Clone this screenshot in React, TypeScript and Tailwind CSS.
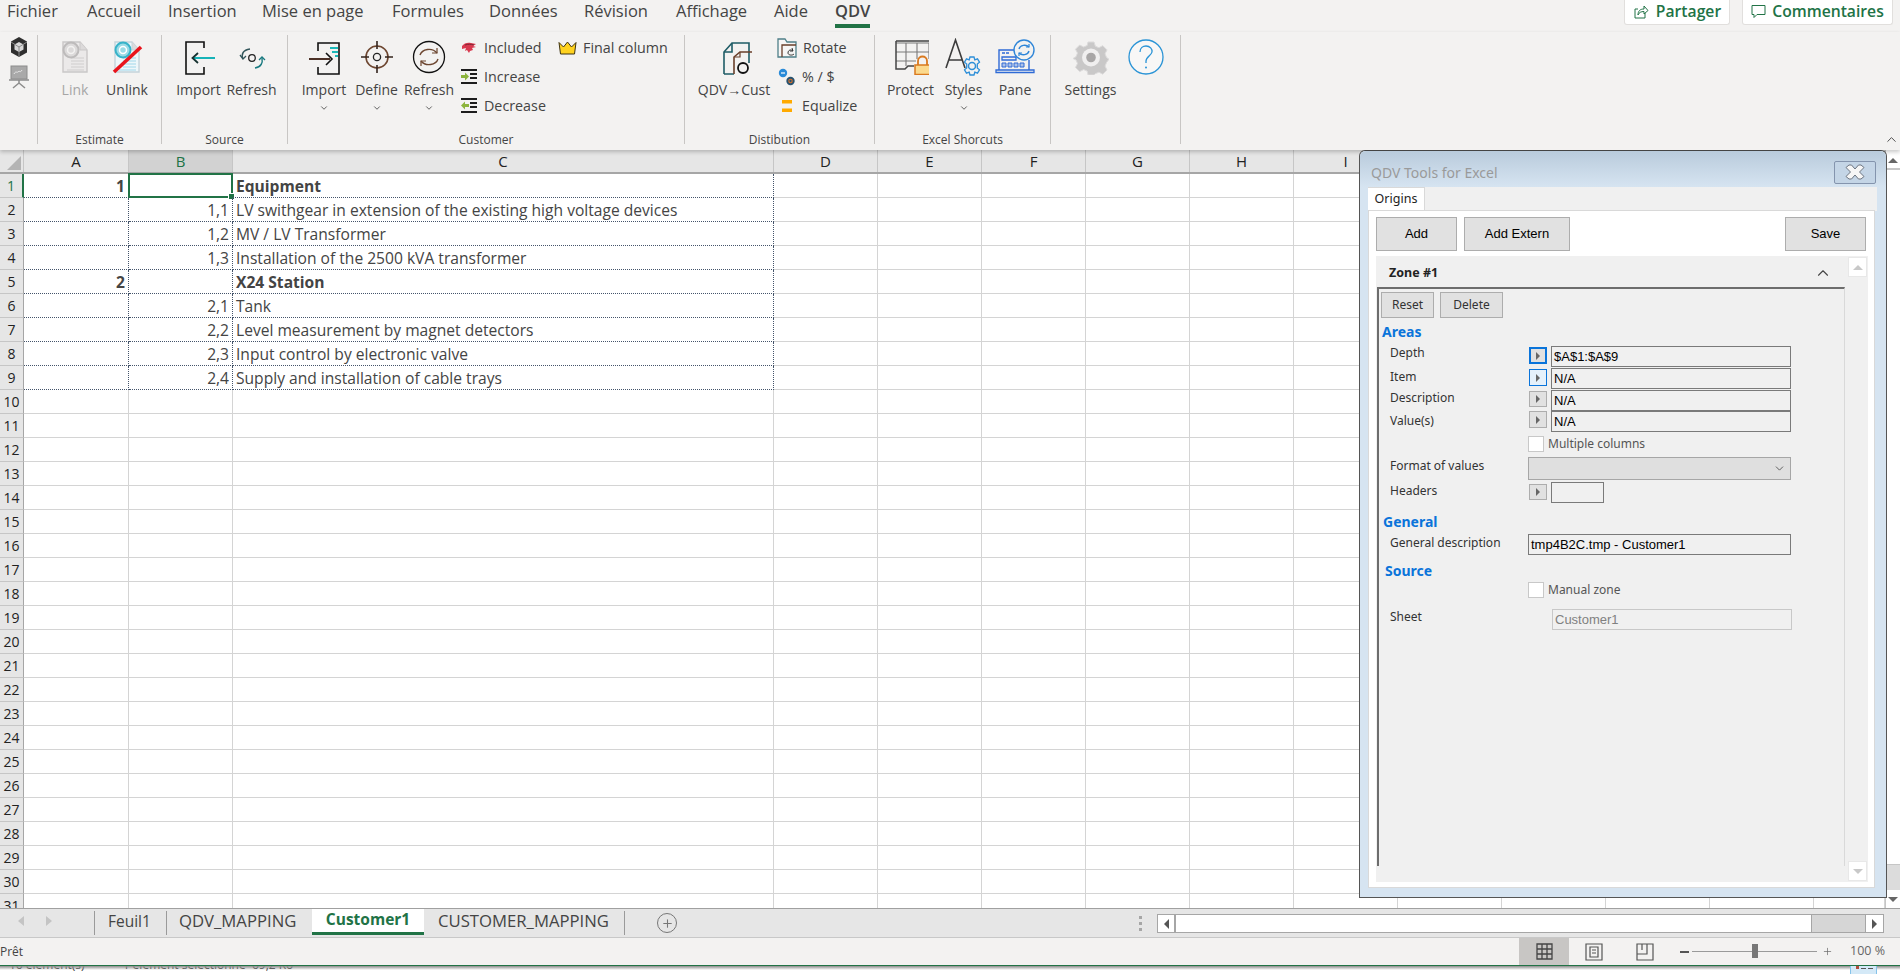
import React from 'react'
import { ChevronDown, ChevronUp, Plus } from 'lucide-react'

const columns = [
  { name: 'A', w: 'w-[105px]' },
  { name: 'B', w: 'w-[104px]' },
  { name: 'C', w: 'w-[541px]' },
  { name: 'D', w: 'w-[104px]' },
  { name: 'E', w: 'w-[104px]' },
  { name: 'F', w: 'w-[104px]' },
  { name: 'G', w: 'w-[104px]' },
  { name: 'H', w: 'w-[104px]' },
  { name: 'I', w: 'w-[104px]' },
  { name: 'J', w: 'w-[104px]' },
  { name: 'K', w: 'w-[104px]' },
  { name: 'L', w: 'w-[104px]' },
  { name: 'M', w: 'w-[104px]' },
  { name: 'N', w: 'w-[71px]' },
]

const data: [string, string, string, boolean][] = [
  ['1', '', 'Equipment', true],
  ['', '1,1', 'LV swithgear in extension of the existing high voltage devices', false],
  ['', '1,2', 'MV / LV Transformer', false],
  ['', '1,3', 'Installation of the 2500 kVA transformer', false],
  ['2', '', 'X24 Station', true],
  ['', '2,1', 'Tank', false],
  ['', '2,2', 'Level measurement by magnet detectors', false],
  ['', '2,3', 'Input control by electronic valve', false],
  ['', '2,4', 'Supply and installation of cable trays', false],
]

const rowNumbers = Array.from({ length: 31 }, (_, i) => i + 1)

const menuItems = [
  { label: 'Fichier', w: 'w-[80px]' },
  { label: 'Accueil', w: 'w-[81px]' },
  { label: 'Insertion', w: 'w-[94px]' },
  { label: 'Mise en page', w: 'w-[130px]' },
  { label: 'Formules', w: 'w-[97px]' },
  { label: 'Données', w: 'w-[95px]' },
  { label: 'Révision', w: 'w-[92px]' },
  { label: 'Affichage', w: 'w-[98px]' },
  { label: 'Aide', w: 'w-[61px]' },
]

function Icon({ children, size = 36 }: { children: React.ReactNode; size?: number }) {
  return (
    <svg width={size} height={size} viewBox={`0 0 ${size} ${size}`} fill="none" className="shrink-0">
      {children}
    </svg>
  )
}

function DocIcon({ off }: { off?: boolean }) {
  const edge = off ? '#c9c7c7' : '#c5d3da'
  const line = off ? '#cfcdcd' : '#9fd8ea'
  const globe = off ? '#bdbbbb' : '#37b3c9'
  return (
    <Icon>
      <path d="M6 3h17l7 8v22H6z" fill={off ? '#ebe9e9' : '#eef7fa'} stroke={edge} strokeWidth="1.400" />
      <path d="M23 3v8h7" fill="#dcdada" stroke={edge} />
      <path d="M14 19h13M14 22h13M14 25h13M14 28h13M10 31h17" stroke={line} strokeWidth="1.200" />
      <circle cx="14" cy="11" r="7.500" fill={off ? '#dcdada' : '#9adbe6'} stroke={globe} strokeWidth="2" />
      <circle cx="14" cy="11" r="3.500" fill="none" stroke={off ? '#f3f2f1' : '#ffffff'} strokeWidth="1.500" />
      {!off && <path d="M5 33 32 8" stroke="#e8141c" strokeWidth="3.600" />}
    </Icon>
  )
}

function ImportSourceIcon() {
  return (
    <Icon>
      <path d="M23 9V3H5v32h18v-7" stroke="#111" strokeWidth="1.600" />
      <path d="M12 19h22" stroke="#16b3b8" strokeWidth="2" />
      <path d="m17 14-5.500 5 5.500 5" stroke="#16312f" strokeWidth="1.800" />
    </Icon>
  )
}

function RefreshSourceIcon() {
  return (
    <Icon>
      <circle cx="18" cy="19" r="3.300" stroke="#222" strokeWidth="1.300" />
      <path d="M9 20c-2-5 0-9 7-10" stroke="#31555a" strokeWidth="1.400" />
      <path d="m6 16 3 4 3-3" stroke="#31555a" strokeWidth="1.300" />
      <path d="M28 19c1 5-1 9-7 10" stroke="#17797f" strokeWidth="1.400" />
      <path d="m25 21 3-3 3 3" stroke="#17797f" strokeWidth="1.300" />
    </Icon>
  )
}

function ImportCustomerIcon() {
  return (
    <Icon>
      <path d="M12 12V4h21v31H12v-7" stroke="#111" strokeWidth="1.600" />
      <path d="M24 9h8M26 13h6M29 17h3" stroke="#1bb8b8" strokeWidth="2" />
      <path d="M3 20h21" stroke="#4c3127" strokeWidth="2" />
      <path d="m20 14 6 6-6 6" stroke="#111" strokeWidth="1.600" />
    </Icon>
  )
}

function DefineIcon() {
  return (
    <Icon>
      <circle cx="18" cy="18" r="11" stroke="#6d4630" strokeWidth="1.600" />
      <circle cx="18" cy="18" r="3.600" stroke="#222" strokeWidth="1.300" />
      <path d="M18 2v8M18 26v8M2 18h8M26 18h8" stroke="#33241d" strokeWidth="1.600" />
    </Icon>
  )
}

function RefreshCustomerIcon() {
  return (
    <Icon>
      <circle cx="18" cy="18" r="15.500" stroke="#111" strokeWidth="1.300" />
      <path d="M9 16c2-6 12-8 17-2" stroke="#6d4630" strokeWidth="1.400" />
      <path d="M27 20c-2 6-12 8-17 2" stroke="#6d4630" strokeWidth="1.400" />
      <path d="M26 9v5h-5M10 27v-5h5" stroke="#6d4630" strokeWidth="1.200" />
    </Icon>
  )
}

function IncludedIcon() {
  return (
    <Icon size={18}>
      <path d="M2 7c2-3 6-4 9-3l5 1-3 2 3 1-4 1 1 2-3 1-1 2-2-3-2 1 1-3-4 1z" fill="#d8384e" />
      <path d="M5 6c3-1 6-1 9 0" stroke="#7f2533" strokeWidth="1" />
    </Icon>
  )
}

function IndentIcon({ reverse }: { reverse?: boolean }) {
  return (
    <Icon size={18}>
      <path d="M1 2h16M10 6h7M10 10h7M1 15h16" stroke="#1d1d1d" strokeWidth="1.800" />
      {reverse ? (
        <path d="M9 7v3H5v2.500L1 8.500l4-4V7z" fill="#8cb43c" />
      ) : (
        <path d="M1 7h4V4.500l4 4-4 4V10H1z" fill="#8cb43c" />
      )}
    </Icon>
  )
}

function CrownIcon() {
  return (
    <svg width="19" height="14" viewBox="0 0 19 14" fill="none" className="shrink-0">
      <path d="M1 1.500 5.500 6 9.500 1l4 5L18 1.500 16.500 13h-14z" fill="#ffd21f" stroke="#3d3210" strokeWidth="1" />
    </svg>
  )
}

function QdvCustIcon() {
  return (
    <Icon>
      <path d="M8 35V13l8-9h17v20" stroke="#1f5c66" strokeWidth="1.600" />
      <path d="M16 4v9H8M8 35h10" stroke="#1f5c66" strokeWidth="1.600" />
      <path d="M18 35V18l6-5h12" stroke="#6a3f2a" strokeWidth="1.600" />
      <path d="M24 13v5h-6" stroke="#6a3f2a" strokeWidth="1.200" />
      <circle cx="27" cy="29" r="5" fill="#f3f2f1" stroke="#111" strokeWidth="1.800" />
    </Icon>
  )
}

function RotateIcon() {
  return (
    <Icon size={20}>
      <path d="M1 19V1h7l2 3h9v15z" stroke="#4f7f88" strokeWidth="1.300" fill="#f7f6f5" />
      <path d="M5 19V7h14" stroke="#6a3f2a" strokeWidth="1.300" />
      <path d="M16 13c-2-2-5-1-5 2 0 2 4 3 6 1" stroke="#333" strokeWidth="1" fill="#f3f2f1" />
      <path d="m15 10 1 3-3 0" stroke="#333" strokeWidth="1" />
    </Icon>
  )
}

function PercentIcon() {
  return (
    <Icon size={18}>
      <circle cx="5" cy="5" r="4.200" fill="#2a8bd8" />
      <path d="M3 5h4" stroke="#fff" strokeWidth="1.200" />
      <circle cx="12.500" cy="13" r="4.200" fill="#27526f" />
      <circle cx="12.500" cy="13" r="1.700" stroke="#d9722b" strokeWidth="1.100" />
    </Icon>
  )
}

function EqualizeIcon() {
  return (
    <Icon size={18}>
      <rect x="4" y="3" width="10" height="3.500" fill="#ffaa00" />
      <rect x="4" y="11.500" width="10" height="3.500" fill="#ffaa00" />
    </Icon>
  )
}

function ProtectIcon() {
  return (
    <Icon>
      <path d="M3 30V2h34v28" fill="#f3f2f1" />
      <path d="M3 4h33M3 13h33M3 22h20M13 4v23M24 4v16M36 4v16" stroke="#7a7a7a" strokeWidth="1.100" />
      <path d="M3 2h34M3 2v28h9l3-3h6" stroke="#444" strokeWidth="1.500" />
      <rect x="22" y="26" width="15" height="9.500" fill="#fbd98d" stroke="#d9791f" strokeWidth="1.500" />
      <path d="M25 26v-4c0-6 9-6 9 0v4" stroke="#d9791f" strokeWidth="1.800" />
    </Icon>
  )
}

function StylesIcon() {
  return (
    <svg width="40" height="38" viewBox="0 0 40 38" fill="none" className="shrink-0">
      <path d="M2 30 11.500 2 21 30M5 22h13" stroke="#3c3c3c" strokeWidth="1.600" />
      <circle cx="28" cy="28" r="3.500" stroke="#2e8fd8" strokeWidth="1.500" />
      <path
        d="m26 19h4l.8 2.800 2.700-1 2 3.400-2.200 1.900v3.800l2.200 1.900-2 3.400-2.700-1-.8 2.800h-4l-.8-2.800-2.700 1-2-3.400 2.200-1.900v-3.800l-2.200-1.900 2-3.400 2.700 1z"
        stroke="#2e8fd8"
        strokeWidth="1.300"
      />
    </svg>
  )
}

function PaneIcon() {
  return (
    <svg width="40" height="36" viewBox="0 0 40 36" fill="none" className="shrink-0">
      <path d="M4 31V11h19M34 21v10" stroke="#2f6bd6" strokeWidth="1.400" />
      <path d="M1 31h38v2.500H1z" stroke="#2f6bd6" strokeWidth="1.300" />
      <path d="M7 14h3M11 14h3M7 18h14v3H7z" stroke="#2f6bd6" strokeWidth="1.300" />
      <path d="M7 24h4v4H7zM13 24h4v4h-4zM19 24h4v4h-4zM25 24h4v4h-4z" fill="#2f6bd6" fillOpacity=".35" stroke="#2f6bd6" />
      <circle cx="29" cy="11" r="10" fill="#f3f2f1" stroke="#2f86d8" strokeWidth="1.400" />
      <path d="M24 10c1-4 7-5 10-2M34 12c-1 4-7 5-10 2" stroke="#2f86d8" strokeWidth="1.400" />
      <path d="M34 5v3h-3M24 17v-3h3" stroke="#2f86d8" strokeWidth="1.200" />
    </svg>
  )
}

function GearIcon() {
  return (
    <Icon>
      <path
        d="m15 3h6l1.300 4.200 3.600 1.500 3.900-2 4.200 4.200-2 3.900 1.500 3.600 2.500 1.800-2.500 3.300-1.500 3.600 2 3.900-4.200 4.200-3.900-2-3.600 1.500L21 36h-6l-.8-3.900-3.600-1.500-3.900 2-4.200-4.200 2-3.900-1.500-3.600L0 19.500 3 17.700l1.500-3.600-2-3.900 4.200-4.200 3.900 2 3.600-1.500z"
        fill="#c9c8c8"
        stroke="#dcdbdb"
      />
      <circle cx="18" cy="18.500" r="9" fill="#f0efef" />
      <circle cx="18" cy="18.500" r="4.800" fill="#a8a6a6" />
    </Icon>
  )
}

function HelpIcon() {
  return (
    <Icon>
      <circle cx="18" cy="18" r="17" fill="#fff" fillOpacity=".4" stroke="#2a94d6" strokeWidth="1.300" />
      <path d="M12 13c0-4 3-6 6-6 4 0 6.500 3 6 6-.5 3-6 5-6 9v2" stroke="#2a94d6" strokeWidth="1.300" />
      <circle cx="18" cy="28.500" r="1" fill="#2a94d6" />
    </Icon>
  )
}

function BigButton({
  label,
  icon,
  w,
  menu,
  off,
}: {
  label?: string
  icon: React.ReactNode
  w: string
  menu?: boolean
  off?: boolean
}) {
  return (
    <div className={`${w} flex flex-col items-center shrink-0`}>
      <div className="h-[38px] mt-[3px] flex items-center justify-center">{icon}</div>
      {label && (
        <div className={`h-[18px] mt-[5px] text-[14px] leading-[18px] whitespace-nowrap ${off ? 'text-[#a6a6a6]' : 'text-[#444]'}`}>
          {label}
        </div>
      )}
      {menu && <ChevronDown className="w-[10px] h-[10px] mt-[4px] text-[#444]" strokeWidth={2} />}
    </div>
  )
}

function SmallButton({ label, icon }: { label: string; icon: React.ReactNode }) {
  return (
    <div className="h-[29px] flex items-center gap-[6px] text-[14.300px] text-[#444] whitespace-nowrap">
      {icon}
      <span>{label}</span>
    </div>
  )
}

function Group({ label, w, pad, children }: { label?: string; w: string; pad: string; children: React.ReactNode }) {
  return (
    <div className={`${w} h-[109px] shrink-0 border-r border-[#c8c6c4] flex flex-col`}>
      <div className={`flex-1 flex items-start ${pad}`}>{children}</div>
      {label && <div className="h-[16px] -mb-[4px] text-center text-[12px] leading-[16px] text-[#444]">{label}</div>}
    </div>
  )
}

function Ribbon() {
  return (
    <div className="relative z-10 h-[118px] shrink-0 pt-[3px] flex items-start bg-[#f3f2f1] shadow-[0_2px_4px_rgba(0,0,0,0.22)]">
      <div className="w-[38px] h-[109px] shrink-0 border-r border-[#c8c6c4] flex flex-col items-center pt-[1px]">
        <svg width="20" height="22" viewBox="0 0 20 22" fill="none">
          <path d="M10 1 18 5.500v11L10 21l-8-4.500v-11z" fill="#2f2f2f" />
          <path d="m10 6 4.500 2.500v5L10 16l-4.500-2.500v-5z" fill="#d8d8d8" />
          <path d="M10 11v10M2 6l8 5 8-5" stroke="#8a8a8a" strokeWidth="1" />
        </svg>
        <svg width="20" height="24" viewBox="0 0 20 24" fill="none" className="mt-[7px]">
          <rect x="2" y="1" width="16" height="13" fill="#a9a9a9" stroke="#8c8c8c" />
          <path d="M5 9c2-4 3 0 5-3 1 1 2 1 3-1" stroke="#e8e8e8" strokeWidth="1" />
          <path d="M0 15h20M10 15v4M10 18l-6 5M10 18l6 5" stroke="#8c8c8c" strokeWidth="1.500" />
        </svg>
      </div>

      <Group label="Estimate" w="w-[124px]" pad="pl-[11px]">
        <BigButton label="Link" w="w-[52px]" off icon={<DocIcon off />} />
        <BigButton label="Unlink" w="w-[52px]" icon={<DocIcon />} />
      </Group>

      <Group label="Source" w="w-[126px]" pad="pl-[10px]">
        <BigButton label="Import" w="w-[53px]" icon={<ImportSourceIcon />} />
        <BigButton label="Refresh" w="w-[53px]" icon={<RefreshSourceIcon />} />
      </Group>

      <Group label="Customer" w="w-[397px]" pad="pl-[10px]">
        <BigButton label="Import" w="w-[52px]" menu icon={<ImportCustomerIcon />} />
        <BigButton label="Define" w="w-[53px]" menu icon={<DefineIcon />} />
        <BigButton label="Refresh" w="w-[52px]" menu icon={<RefreshCustomerIcon />} />
        <div className="w-[103px] shrink-0 -mt-[2px] pl-[5px]">
          <SmallButton label="Included" icon={<IncludedIcon />} />
          <SmallButton label="Increase" icon={<IndentIcon />} />
          <SmallButton label="Decrease" icon={<IndentIcon reverse />} />
        </div>
        <div className="-mt-[2px]">
          <SmallButton label="Final column" icon={<CrownIcon />} />
        </div>
      </Group>

      <Group label="Distibution" w="w-[190px]" pad="pl-[1px]">
        <BigButton label="QDV→Cust" w="w-[96px]" icon={<QdvCustIcon />} />
        <div className="-mt-[2px] -ml-[5px]">
          <SmallButton label="Rotate" icon={<RotateIcon />} />
          <SmallButton label="% / $" icon={<div className="pl-px"><PercentIcon /></div>} />
          <SmallButton label="Equalize" icon={<div className="pl-px"><EqualizeIcon /></div>} />
        </div>
      </Group>

      <Group label="Excel Shorcuts" w="w-[176px]" pad="pl-[9px]">
        <BigButton label="Protect" w="w-[53px]" icon={<ProtectIcon />} />
        <BigButton label="Styles" w="w-[53px]" menu icon={<StylesIcon />} />
        <BigButton label="Pane" w="w-[50px]" icon={<PaneIcon />} />
      </Group>

      <Group w="w-[130px]" pad="pl-[12px]">
        <BigButton label="Settings" w="w-[55px]" icon={<GearIcon />} />
        <BigButton w="w-[55px]" icon={<HelpIcon />} />
      </Group>

      <ChevronUp className="absolute right-[1px] top-[100px] w-[15px] h-[15px] text-[#444]" strokeWidth={1.500} />
    </div>
  )
}

function MenuBar() {
  return (
    <div className="h-[32px] shrink-0 bg-[#f3f2f1] flex items-start pl-[7px] text-[16.500px] text-[#444] overflow-hidden">
      {menuItems.map((m) => (
        <span key={m.label} className={`${m.w} shrink-0 leading-[22px]`}>
          {m.label}
        </span>
      ))}
      <span className="h-[28px] leading-[22px] font-semibold border-b-[4px] border-[#217346]">QDV</span>
      <div className="ml-auto flex gap-[12px] pr-[7px] text-[15.700px] font-semibold text-[#217346]">
        <div className="w-[106px] h-[25px] pb-px flex items-center justify-center gap-[7px] bg-white border border-t-0 border-[#e1dfdd] rounded-b-[3px]">
          <svg width="16" height="16" viewBox="0 0 16 16" fill="none" stroke="#217346" strokeWidth="1">
            <path d="M5 5H2v9h10V9" />
            <path d="M5 11c0-4 2-6 6-6V2l4 4.500L11 10V7.500c-3 0-5 1-6 3.500z" />
          </svg>
          <span>Partager</span>
        </div>
        <div className="w-[151px] h-[25px] pb-px flex items-center justify-center gap-[6px] bg-white border border-t-0 border-[#e1dfdd] rounded-b-[3px]">
          <svg width="15" height="15" viewBox="0 0 15 15" fill="none" stroke="#217346" strokeWidth="1">
            <path d="M1 1.500h13v9H6l-3 3v-3H1z" />
          </svg>
          <span>Commentaires</span>
        </div>
      </div>
    </div>
  )
}

function Sheet() {
  return (
    <div className="h-[758px] shrink-0 flex bg-white">
      <div className="w-[1885px] shrink-0 overflow-hidden">
        <div className="flex h-[24px] bg-[#e6e6e6] border-b-2 border-[#a6a6a6] text-[15px] leading-[22px] text-[#222]">
          <div className="w-[24px] shrink-0 border-r border-[#c6c6c6] flex items-end justify-end p-[2px]">
            <div className="w-0 h-0 border-l-[14px] border-l-transparent border-b-[14px] border-b-[#b4b4b4]" />
          </div>
          {columns.map((c) => (
            <div
              key={c.name}
              className={`${c.w} shrink-0 text-center border-r border-[#c6c6c6] ${c.name === 'B' ? 'bg-[#d2d2d2] text-[#217346]' : ''}`}
            >
              {c.name}
            </div>
          ))}
        </div>
        {rowNumbers.map((n) => {
          const row = data[n - 1]
          return (
            <div key={n} className="flex h-[24px] text-[#444] text-[15.600px] leading-[24px]">
              <div
                className={`w-[24px] shrink-0 text-center text-[14px] leading-[23px] bg-[#e6e6e6] border-b border-[#c6c6c6] border-r ${
                  n === 1 ? 'bg-[#d2d2d2] text-[#217346] border-r-2 border-r-[#217346]' : 'border-r-[#a6a6a6] text-[#222]'
                }`}
              >
                {n}
              </div>
              {columns.map((c, i) => {
                if (row && i < 3) {
                  return (
                    <div
                      key={c.name}
                      className={`${c.w} shrink-0 relative border-r border-r-[#44546a] border-b border-dotted border-b-[#44546a] ${
                        i === 2 ? 'pl-[3px] whitespace-nowrap' : 'text-right pr-[3px]'
                      } ${row[3] ? 'font-bold' : ''}`}
                    >
                      {row[i]}
                      {n === 1 && i === 1 && (
                        <div className="absolute -left-[1px] -top-[1px] -right-[1px] -bottom-[1px] border-2 border-[#217346]">
                          <div className="absolute -right-[4px] -bottom-[4px] w-[7px] h-[7px] bg-[#217346] border border-white" />
                        </div>
                      )}
                    </div>
                  )
                }
                return <div key={c.name} className={`${c.w} shrink-0 border-r border-b border-[#d4d4d4]`} />
              })}
            </div>
          )
        })}
      </div>
      <div className="flex-1 flex flex-col bg-white border-l border-[#c6c6c6] pt-[2px]">
        <div className="h-[18px] border-b-2 border-[#c6c6c6] flex items-center justify-center">
          <div className="w-0 h-0 border-x-[5px] border-x-transparent border-b-[5px] border-b-[#666]" />
        </div>
        <div className="flex-1 border-b border-[#c6c6c6]" />
        <div className="h-[25px] bg-[#dcdcdc]" />
        <div className="h-[18px] flex items-center justify-center">
          <div className="w-0 h-0 border-x-[5px] border-x-transparent border-t-[5px] border-t-[#666]" />
        </div>
      </div>
    </div>
  )
}

function SheetTabs() {
  return (
    <div className="h-[30px] shrink-0 flex bg-[#e6e6e6] border-t border-[#a0a0a0] border-b border-b-[#c8c8c8] text-[#444] text-[15.500px]">
      <div className="w-[94px] h-[24px] flex items-center">
        <div className="ml-[18px] w-0 h-0 border-y-[5px] border-y-transparent border-r-[6px] border-r-[#c4c4c4]" />
        <div className="ml-[22px] w-0 h-0 border-y-[5px] border-y-transparent border-l-[6px] border-l-[#c4c4c4]" />
      </div>
      <div className="w-[72px] h-[24px] my-auto border-l border-[#9a9a9a] pl-[13px] leading-[20px]">Feuil1</div>
      <div className="w-[146px] h-[24px] my-auto border-l border-[#9a9a9a] pl-[12px] text-[16.700px] leading-[20px] whitespace-nowrap">QDV_MAPPING</div>
      <div className="w-[112px] h-[26px] bg-white border-b-[3px] border-[#217346] text-center font-bold text-[#217346] leading-[21px]">
        Customer1
      </div>
      <div className="w-[201px] h-[24px] my-auto border-r border-[#9a9a9a] pl-[14px] text-[16.700px] leading-[20px] whitespace-nowrap">CUSTOMER_MAPPING</div>
      <div className="ml-[32px] w-[20px] h-[20px] mt-[4px] rounded-full border border-[#777] flex items-center justify-center">
        <Plus className="w-[13px] h-[13px] text-[#777]" strokeWidth={2} />
      </div>
      <div className="ml-[462px] mt-[7px] w-[3px] h-[15px] border-y-[3px] border-[#a6a6a6] bg-[linear-gradient(#e6e6e6_33%,#a6a6a6_33%,#a6a6a6_66%,#e6e6e6_66%)]" />
      <div className="ml-[15px] mt-[5px] w-[727px] h-[19px] flex border border-[#a6a6a6] bg-[#d6d6d6]">
        <div className="w-[18px] bg-white border-r-2 border-[#a6a6a6] flex items-center justify-center">
          <div className="w-0 h-0 border-y-[5px] border-y-transparent border-r-[5px] border-r-[#555]" />
        </div>
        <div className="w-[636px] bg-white border-r border-[#a6a6a6]" />
        <div className="flex-1" />
        <div className="w-[18px] bg-white border-l border-[#a6a6a6] flex items-center justify-center">
          <div className="w-0 h-0 border-y-[5px] border-y-transparent border-l-[5px] border-l-[#555]" />
        </div>
      </div>
    </div>
  )
}

function StatusBar() {
  return (
    <div className="h-[28px] shrink-0 flex items-stretch bg-[#f3f2f1] text-[#444] text-[12px] border-b border-[#217346]">
      <span className="leading-[27px]">Prêt</span>
      <div className="ml-auto w-[50px] bg-[#c8c6c4] flex items-center justify-center">
        <svg width="17" height="17" viewBox="0 0 17 17" fill="none" stroke="#444" strokeWidth="1.300">
          <path d="M1 1h15v15H1zM6 1v15M11 1v15M1 6h15M1 11h15" />
        </svg>
      </div>
      <div className="w-[50px] flex items-center justify-center">
        <svg width="18" height="18" viewBox="0 0 18 18" fill="none" stroke="#555" strokeWidth="1.200">
          <path d="M1 1h16v16H1zM5 4h8v10H5zM7 7h4M7 10h4" />
        </svg>
      </div>
      <div className="w-[52px] flex items-center justify-center">
        <svg width="18" height="18" viewBox="0 0 18 18" fill="none" stroke="#555" strokeWidth="1.200">
          <path d="M1 1h16v16H1zM1 11h10V1M6 1v6" />
        </svg>
      </div>
      <div className="w-[229px] shrink-0 flex items-center text-[#666]">
        <div className="ml-[9px] w-[9px] h-[2px] bg-[#555]" />
        <div className="ml-[3px] relative w-[125px] h-px bg-[#9a9a9a]">
          <div className="absolute left-[60px] -top-[7px] w-[6px] h-[14px] bg-[#777]" />
        </div>
        <Plus className="ml-[5px] w-[11px] h-[11px]" strokeWidth={1.500} />
        <span className="ml-[17px] text-[12.500px]">100 %</span>
      </div>
    </div>
  )
}

function Explorer() {
  return (
    <div className="flex-1 min-h-0 relative overflow-hidden bg-white text-[12px] text-[#444]">
      <div className="flex -mt-[9px] pl-[9px] gap-[38px] leading-[16px]">
        <span>16 élément(s)</span>
        <span>1 élément sélectionné&nbsp;&nbsp;69,2 Ko</span>
      </div>
      <div className="absolute inset-x-0 top-0 h-[4px] bg-gradient-to-b from-[#8d8d8d] to-transparent" />
      <div className="absolute left-[1850px] top-0 w-[27px] h-[8px] bg-[#d4e9f7] border-x border-[#86c3ea] flex gap-[2px] pl-[5px]">
        <div className="w-[3px] h-[3px] bg-[#b04a3a]" />
        <div className="w-[5px] h-px mt-[2px] bg-[#555]" />
        <div className="w-[5px] h-px mt-[2px] bg-[#555]" />
      </div>
    </div>
  )
}

function ArrowButton({ focus, className }: { focus?: 'strong' | 'soft'; className: string }) {
  const border =
    focus === 'strong'
      ? 'border-2 border-[#0a74da]'
      : focus === 'soft'
        ? 'border border-[#0a74da] bg-[#e5f1fb]'
        : 'border border-[#adadad]'
  return (
    <div className={`w-[18px] shrink-0 flex items-center justify-center bg-[#e1e1e1] ${border} ${className}`}>
      <div className="w-0 h-0 border-y-[4px] border-y-transparent border-l-[4px] border-l-[#666]" />
    </div>
  )
}

function TextBox({ value, className }: { value?: string; className: string }) {
  return (
    <div className={`h-[21px] shrink-0 border border-[#7a7a7a] pl-[2px] text-[13px] leading-[20px] text-black font-['Liberation_Sans',sans-serif] whitespace-nowrap ${className}`}>
      {value}
    </div>
  )
}

function WinButton({ label, w, h }: { label: string; w: string; h: string }) {
  return (
    <div className={`${w} ${h} shrink-0 flex items-center justify-center bg-[#e1e1e1] border border-[#adadad]`}>
      {label}
    </div>
  )
}

function Label({ children, className = '' }: { children: React.ReactNode; className?: string }) {
  return <div className={`w-[139px] ml-[10px] shrink-0 leading-[15px] whitespace-nowrap text-[#333] ${className}`}>{children}</div>
}

function CheckBox() {
  return <div className="w-[16px] h-[16px] shrink-0 bg-white border border-[#c8c8c8]" />
}

function Heading({ children, className }: { children: React.ReactNode; className: string }) {
  return <div className={`text-[14px] font-bold leading-[16px] text-[#0a74da] ${className}`}>{children}</div>
}

function ToolsWindow() {
  return (
    <div className="absolute left-[1359px] top-[150px] z-20 w-[528px] h-[748px] flex flex-col bg-[#d6e4f1] border border-[#555] border-t-[#444] rounded-t-[6px] font-['Noto_Sans',sans-serif]">
      <div className="h-[36px] shrink-0 flex items-center pl-[11px] pr-[10px] rounded-t-[6px] bg-gradient-to-b from-[#b9cbdc] to-[#d6e4f1]">
        <span className="text-[14px] leading-[40px] mt-[8px] text-[#9a9a9a]">QDV Tools for Excel</span>
        <div className="ml-auto mt-[6px] w-[42px] h-[23px] flex items-center justify-center border border-[#8494ad] rounded-[2px] bg-[#c4d5e6]">
          <svg width="20" height="16" viewBox="0 0 20 16">
            <path d="M4 1h2.500L10 5l3.500-4H16l3 2.500L14.500 8l4.500 4.500L16 15h-2.500L10 11l-3.500 4H4l-3-2.500L5.500 8 1 3.500z" fill="#f6f6f6" stroke="#6c7480" strokeWidth="1" />
          </svg>
        </div>
      </div>
      <div className="ml-[8px] mr-[9px] flex-1 flex flex-col">
        <div className="h-[24px] shrink-0 bg-[#f0f0f0] flex">
          <div className="w-[57px] h-[24px] bg-white border-r border-t border-[#d9d9d9] text-center text-[12.500px] leading-[21px] text-[#222]">Origins</div>
        </div>
        <div className="h-[678px] w-[507px] shrink-0 -mt-px bg-white border border-[#d9d9d9] px-[7px]">
          <div className="flex pt-[6px] gap-[7px] text-[13px] font-['Liberation_Sans',sans-serif] text-black">
            <WinButton label="Add" w="w-[81px]" h="h-[34px]" />
            <WinButton label="Add Extern" w="w-[106px]" h="h-[34px]" />
            <div className="ml-[208px]">
              <WinButton label="Save" w="w-[81px]" h="h-[34px]" />
            </div>
          </div>
          <div className="mt-[5px] h-[626px] w-[492px] bg-[#f0f0f0] flex text-[12px]">
            <div className="w-[472px] shrink-0">
              <div className="h-[31px] flex items-center pt-[3px] pl-[13px] pr-[16px] text-[12.500px] font-bold text-[#222]">
                Zone #1
                <ChevronUp className="ml-auto w-[18px] h-[18px] text-[#444]" strokeWidth={1.500} />
              </div>
              <div className="ml-px w-[468px] h-[579px] pl-px border-t-2 border-l-2 border-t-[#6d6d6d] border-l-[#6d6d6d] border-r border-r-[#d9d9d9]">
                <div className="flex pt-[3px] pl-px gap-[6px] text-[#333]">
                  <WinButton label="Reset" w="w-[53px]" h="h-[26px]" />
                  <WinButton label="Delete" w="w-[63px]" h="h-[26px]" />
                </div>
                <div className="h-[27px]">
                  <Heading className="pt-[6px] pl-[2px]">Areas</Heading>
                </div>
                <div className="flex h-[23px] items-start">
                  <Label>Depth</Label>
                  <ArrowButton focus="strong" className="mt-[2px] h-[17px]" />
                  <TextBox value="$A$1:$A$9" className="ml-[4px] mt-[1px] w-[240px]" />
                </div>
                <div className="flex h-[22px] items-start">
                  <Label className="pt-px">Item</Label>
                  <ArrowButton focus="soft" className="mt-px h-[17px]" />
                  <TextBox value="N/A" className="ml-[4px] w-[240px]" />
                </div>
                <div className="flex h-[21px] items-start">
                  <Label>Description</Label>
                  <ArrowButton className="mt-px h-[16px]" />
                  <TextBox value="N/A" className="ml-[4px] w-[240px]" />
                </div>
                <div className="flex h-[25px] items-start">
                  <Label className="pt-[2px]">Value(s)</Label>
                  <ArrowButton className="h-[17px]" />
                  <TextBox value="N/A" className="ml-[4px] w-[240px]" />
                </div>
                <div className="flex h-[21px] items-start">
                  <div className="w-[148px] shrink-0" />
                  <CheckBox />
                  <span className="ml-[4px] leading-[15px] text-[#555]">Multiple columns</span>
                </div>
                <div className="flex h-[25px] items-start">
                  <Label className="pt-px -mr-px">Format of values</Label>
                  <div className="w-[263px] h-[23px] flex items-center justify-end pr-[4px] bg-[#dfdfdf] border border-[#a6a6a6]">
                    <ChevronDown className="w-[13px] h-[13px] text-[#444]" strokeWidth={1.500} />
                  </div>
                </div>
                <div className="flex h-[30px] items-start">
                  <Label className="pt-px">Headers</Label>
                  <ArrowButton className="mt-[2px] h-[16px]" />
                  <TextBox className="ml-[4px] w-[53px]" />
                </div>
                <div className="h-[22px]">
                  <Heading className="pt-[2px] pl-[3px]">General</Heading>
                </div>
                <div className="flex h-[29px] items-start">
                  <Label className="pt-px -mr-px">General description</Label>
                  <TextBox value="tmp4B2C.tmp - Customer1" className="w-[263px]" />
                </div>
                <div className="h-[19px]">
                  <Heading className="pl-[5px]">Source</Heading>
                </div>
                <div className="flex h-[26px] items-start">
                  <div className="w-[148px] shrink-0" />
                  <CheckBox />
                  <span className="ml-[4px] leading-[15px] text-[#555]">Manual zone</span>
                </div>
                <div className="flex h-[22px] items-start">
                  <Label className="pt-px">Sheet</Label>
                  <div className="ml-[23px] mt-px w-[240px] h-[21px] border border-[#c8c8c8] pl-[2px] text-[13px] leading-[20px] text-[#808080] font-['Liberation_Sans',sans-serif]">
                    Customer1
                  </div>
                </div>
              </div>
            </div>
            <div className="w-[19px] shrink-0 flex flex-col justify-between pt-px pb-px">
              <div className="h-[20px] bg-white border border-[#e8e8e8] flex items-center justify-center">
                <div className="w-0 h-0 border-x-[5px] border-x-transparent border-b-[5px] border-b-[#c8c8c8]" />
              </div>
              <div className="h-[20px] bg-white border border-[#e8e8e8] flex items-center justify-center">
                <div className="w-0 h-0 border-x-[5px] border-x-transparent border-t-[5px] border-t-[#c8c8c8]" />
              </div>
            </div>
          </div>
        </div>
      </div>
    </div>
  )
}

export default function App() {
  return (
    <div className="relative w-[1900px] h-[974px] flex flex-col overflow-hidden bg-white font-['Open_Sans',sans-serif]">
      <MenuBar />
      <Ribbon />
      <Sheet />
      <SheetTabs />
      <StatusBar />
      <Explorer />
      <ToolsWindow />
    </div>
  )
}
